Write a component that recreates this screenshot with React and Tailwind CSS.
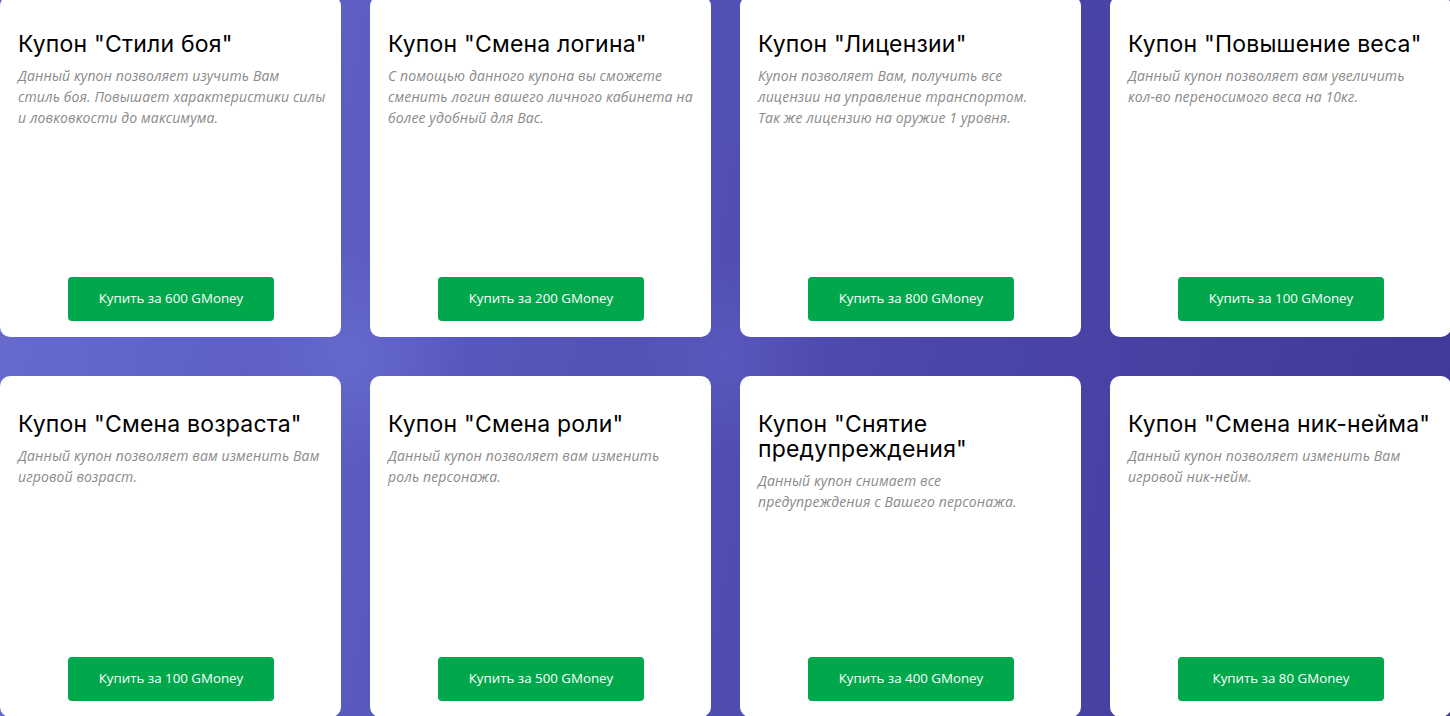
import React from 'react';

const coupons = [
  {
    title: 'Купон "Стили боя"',
    lines: ['Данный купон позволяет изучить Вам', 'стиль боя. Повышает характеристики силы', 'и ловковкости до максимума.'],
    price: 600,
  },
  {
    title: 'Купон "Смена логина"',
    lines: ['С помощью данного купона вы сможете', 'сменить логин вашего личного кабинета на', 'более удобный для Вас.'],
    price: 200,
  },
  {
    title: 'Купон "Лицензии"',
    lines: ['Купон позволяет Вам, получить все', 'лицензии на управление транспортом.', 'Так же лицензию на оружие 1 уровня.'],
    price: 800,
  },
  {
    title: 'Купон "Повышение веса"',
    lines: ['Данный купон позволяет вам увеличить', 'кол-во переносимого веса на 10кг.'],
    price: 100,
  },
  {
    title: 'Купон "Смена возраста"',
    lines: ['Данный купон позволяет вам изменить Вам', 'игровой возраст.'],
    price: 100,
  },
  {
    title: 'Купон "Смена роли"',
    lines: ['Данный купон позволяет вам изменить', 'роль персонажа.'],
    price: 500,
  },
  {
    title: 'Купон "Снятие предупреждения"',
    lines: ['Данный купон снимает все', 'предупреждения с Вашего персонажа.'],
    price: 400,
  },
  {
    title: 'Купон "Смена ник-нейма"',
    lines: ['Данный купон позволяет изменить Вам', 'игровой ник-нейм.'],
    price: 80,
  },
];

function CouponCard({ c }) {
  return (
    <div className="flex h-[341px] flex-col rounded-[10px] bg-white pb-4 pl-[18px] pr-[12px] pt-[35.5px]">
      <h3 className="pr-[6px] font-['Inter',sans-serif] text-[23px] font-normal leading-[25px] tracking-[0.2px] text-black">
        {c.title}
      </h3>
      <p className="mt-[8px] font-['Open_Sans',sans-serif] text-[14px] italic leading-[21px] tracking-[0.12px] text-[#8a8a8a]">
        {c.lines.map((l) => (
          <span key={l} className="block whitespace-nowrap">
            {l}
          </span>
        ))}
      </p>
      <div className="mt-auto flex justify-center pr-[5px]">
        <button className="h-[44px] w-[206px] rounded-[4px] bg-[#00a84b] font-['Open_Sans',sans-serif] text-[13.3px] text-white">
          Купить за {c.price} GMoney
        </button>
      </div>
    </div>
  );
}

export default function App() {
  return (
    <div className="h-[716px] w-full overflow-hidden bg-[radial-gradient(circle_at_355px_357px,rgba(115,120,220,0.45)_0,rgba(115,120,220,0)_110px),radial-gradient(circle_at_725px_357px,rgba(105,105,210,0.35)_0,rgba(105,105,210,0)_100px),linear-gradient(100deg,#686cd0_0%,#5657ba_35%,#4a46a8_65%,#413898_100%)]">
      <div className="-mt-[4px] grid w-[1451px] grid-cols-4 gap-x-[29px] gap-y-[39px]">
        {coupons.map((c) => (
          <CouponCard key={c.title} c={c} />
        ))}
      </div>
    </div>
  );
}
